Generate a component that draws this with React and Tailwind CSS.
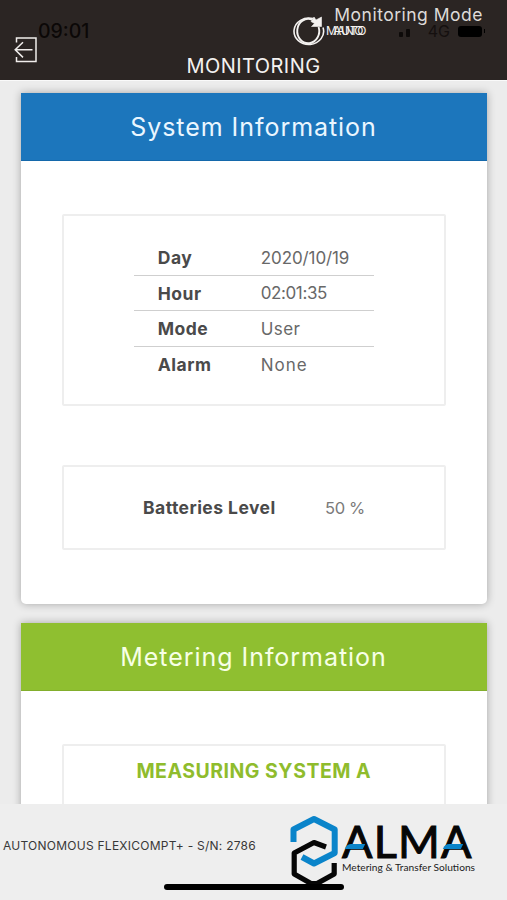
import React from 'react';

const systemRows = [
    { label: 'Day', value: '2020/10/19', tracking: 'tracking-[-0.1px]' },
    { label: 'Hour', value: '02:01:35', tracking: 'tracking-[-0.4px]' },
    { label: 'Mode', value: 'User', tracking: 'tracking-[0.4px]' },
    { label: 'Alarm', value: 'None', tracking: 'tracking-[1px]' },
];

const ExitIcon = () => (
    <svg width="26" height="28" viewBox="0 0 26 28" fill="none" stroke="#f1eeec" strokeWidth="1.5">
        <path d="M3.5 6.5V2H23V25.5H3.5V21" />
        <path d="M19.5 13.8H2.5M10 6.2L2.2 13.8L10 21.4" />
    </svg>
);

const CycleIcon = () => (
    <svg width="34" height="32" viewBox="0 0 34 32" fill="none" stroke="#f4f2f0">
        <path d="M22 3.6A14.8 13.2 0 1 0 32 12.5" strokeWidth="1.6" />
        <path d="M21 4.6A11 12.2 0 1 0 27.6 12" strokeWidth="1.9" />
        <path d="M23 2L25 5L30.5 2V11.5H20.5L23.5 8.5L20 6.5Z" fill="#f4f2f0" strokeWidth="0.6" />
    </svg>
);

const StatusIcons = () => (
    <div className="absolute right-[22px] top-[24px] flex items-center text-[#0d0a09]">
        <div className="mr-[18px] flex items-end gap-[3px] pt-[3px]">
            <span className="h-[5px] w-[4px] rounded-[1px] bg-current" />
            <span className="h-[8px] w-[4px] rounded-[1px] bg-current" />
        </div>
        <span className="mr-[8px] text-[16px] leading-[14px] text-[#15100f]">4G</span>
        <span className="h-[11px] w-[24px] rounded-[3px] bg-black" />
        <span className="ml-[2px] h-[4px] w-[1px] bg-black" />
    </div>
);

const TopBar = () => (
    <header className="relative h-[80px] shrink-0 bg-[#2b2523] text-[#f4f2f0]">
        <span className="absolute left-[38px] top-[20px] text-[19.5px] leading-[23px] font-medium text-[#0b0807]">09:01</span>
        <div className="absolute left-[13px] top-[36px]"><ExitIcon /></div>
        <div className="absolute left-[291px] top-[15px]"><CycleIcon /></div>
        <div className="absolute left-[326px] top-[24px] grid text-[12px] leading-[13px]">
            <span className="col-start-1 row-start-1">MANO</span>
            <span className="col-start-1 row-start-1 pl-[7px]">AUTO</span>
        </div>
        <StatusIcons />
        <span className="absolute right-[24px] top-[4px] text-[17.5px] leading-[22px] tracking-[0.5px] whitespace-nowrap text-[#dedbd9]">Monitoring Mode</span>
        <h1 className="pt-[54px] text-center text-[20px] leading-[24px] tracking-[0.45px]">MONITORING</h1>
    </header>
);

const Card = ({ title, headerClass, className, children }) => (
    <section className={`mx-[20.5px] shrink-0 bg-white shadow-[0_0_8px_rgba(0,0,0,0.3)] ${className}`}>
        <h2 className={`flex h-[68px] items-center justify-center border-b pt-[2px] text-[25px] font-normal ${headerClass}`}>{title}</h2>
        <div className="pr-[41px] pl-[41.5px] pt-[53px]">{children}</div>
    </section>
);

const Panel = ({ className, children }) => (
    <div className={`rounded-[2px] border-2 border-[#eeeeee] ${className}`}>{children}</div>
);

const BlueBar = ({ className }) => (
    <span className={`absolute top-[23px] h-[5px] w-[18px] -skew-x-[25deg] rounded-tl-[4px] bg-[#0a84ca] ${className}`} />
);

const AlmaLogo = () => (
    <div className="flex">
        <svg width="52" height="74" viewBox="0 0 52 74" fill="none" strokeWidth="6" strokeLinejoin="round">
            <path d="M5.5 27V14.5L26 4L46.7 14.5V38L26 48.5L14 42" stroke="#0a84ca" />
            <path d="M38 32L26 27.5L6.2 38V59L23 68.5H29L46.2 59V48" stroke="#060606" strokeWidth="5.2" />
        </svg>
        <div className="pt-[6px] pl-[2px]">
            <div className="relative w-[132px] font-[Lato] text-[45px] leading-[40px] tracking-[1.2px] text-[#060606] [-webkit-text-stroke:1.1px_#060606]">
                ALMA
                <BlueBar className="left-[4px]" />
                <BlueBar className="left-[102px]" />
            </div>
            <p className="font-[Lato] text-[10.2px] leading-[13px] whitespace-nowrap text-[#1c1c1c]">Metering &amp; Transfer Solutions</p>
        </div>
    </div>
);

export default function App() {
    return (
        <div className="flex h-[900px] w-[507px] flex-col overflow-hidden bg-[#ececec] font-[Inter,sans-serif]">
            <TopBar />

            <main className="flex min-h-0 flex-1 flex-col gap-[19px] overflow-hidden border-t border-[#fafafa] pt-[12px]">
                <Card title="System Information" headerClass="bg-[#1c76bc] border-[#1468ab] text-[#eaf6ff] tracking-[0.95px]" className="h-[511px] rounded-b-[5px]">
                    <Panel className="flex h-[192px] flex-col items-center pt-[24px]">
                        <dl className="w-[240px]">
                            {systemRows.map((row) => (
                                <div key={row.label} className="flex h-[35.6px] items-center border-b-[1.5px] border-[#cfcfcf] pt-[2px] pl-[24px] text-[17px] last:border-b-0">
                                    <dt className="w-[103px] text-[17.5px] tracking-[0.5px] font-bold text-[#4a4a4a]">{row.label}</dt>
                                    <dd className={`text-[#686868] ${row.tracking}`}>{row.value}</dd>
                                </div>
                            ))}
                        </dl>
                    </Panel>
                    <Panel className="mt-[59px] flex h-[85px] items-center pt-[2px] pl-[79px]">
                        <span className="w-[182px] text-[17.5px] tracking-[0.45px] font-bold text-[#4a4a4a]">Batteries Level</span>
                        <span className="text-[16.5px] tracking-[-0.4px] text-[#7a7a7a]">50 %</span>
                    </Panel>
                </Card>

                <Card title="Metering Information" headerClass="bg-[#8fbf30] border-[#82ae2c] text-[#f7ffe6] tracking-[0.95px]" className="h-[400px]">
                    <Panel className="h-[300px] pt-[13px]">
                        <h3 className="text-center text-[19.5px] leading-[24px] tracking-[0.5px] font-bold text-[#8fbc2d]">MEASURING SYSTEM A</h3>
                    </Panel>
                </Card>
            </main>

            <footer className="relative flex h-[96px] shrink-0 bg-[#eeeeee]">
                <p className="w-[288px] shrink-0 pt-[33px] pl-[3px] text-[12px] leading-[18px] tracking-[0.25px] whitespace-nowrap text-[#383838]">AUTONOMOUS FLEXICOMPT+ - S/N: 2786</p>
                <div className="pt-[11px]"><AlmaLogo /></div>
                <div className="absolute bottom-[10px] left-[164px] h-[6px] w-[180px] rounded-full bg-black" />
            </footer>
        </div>
    );
}
